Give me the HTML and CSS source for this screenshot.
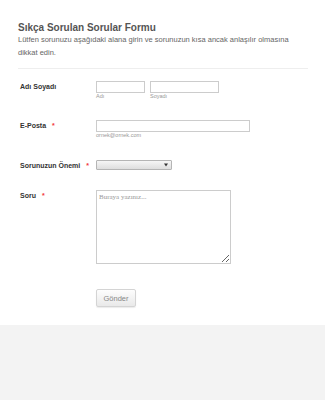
FILE: index.html
```html
<!DOCTYPE html>
<html>
  <head>
    <meta charset="UTF-8">
    <title>Sıkça Sorulan Sorular Formu</title>
    <link rel="stylesheet" href="styles.css">
  </head>
  <body>
    <form class="form-all">
      <div class="form-header">
        <h2>Sıkça Sorulan Sorular Formu</h2>
        <p>Lütfen sorunuzu aşağıdaki alana girin ve sorunuzun kısa ancak anlaşılır olmasına dikkat edin.</p>
      </div>
      <ul class="form-section">
        <li class="form-line">
          <label class="form-label">Adı Soyadı</label>
          <div class="form-input">
            <span class="sub first">
              <input type="text" class="text name-first">
              <label>Adı</label>
            </span>
            <span class="sub">
              <input type="text" class="text name-last">
              <label>Soyadı</label>
            </span>
          </div>
        </li>
        <li class="form-line">
          <label class="form-label">E-Posta<span class="required">*</span></label>
          <div class="form-input">
            <span class="sub">
              <input type="email" class="text email">
              <label>ornek@ornek.com</label>
            </span>
          </div>
        </li>
        <li class="form-line importance">
          <label class="form-label">Sorunuzun Önemi<span class="required">*</span></label>
          <div class="form-input">
            <select class="dropdown">
              <option></option>
              <option>Düşük</option>
              <option>Orta</option>
              <option>Yüksek</option>
            </select>
          </div>
        </li>
        <li class="form-line">
          <label class="form-label">Soru<span class="required">*</span></label>
          <div class="form-input">
            <textarea class="textarea" placeholder="Buraya yazınız..."></textarea>
          </div>
        </li>
        <li class="form-line buttons">
          <div class="form-input">
            <button type="submit" class="submit">Gönder</button>
          </div>
        </li>
      </ul>
    </form>
  </body>
</html>
```

FILE: styles.css
```css
body {
  margin: 0;
  background: #f3f3f3;
  font-family: "Liberation Sans", Arial, sans-serif;
  color: #555;
}

.form-all {
  background: #fff;
  padding: 23px 17px 18px 18px;
}

.form-header {
  border-bottom: 1px solid #eee;
  padding-bottom: 9px;
}
.form-header h2 {
  margin: 0;
  font-size: 10px;
  font-weight: bold;
  line-height: 10px;
  color: #555;
}
.form-header p {
  margin: 0;
  font-size: 7.5px;
  line-height: 13px;
  color: #666;
}

.form-section {
  list-style: none;
  margin: 0;
  padding: 0;
}
.form-line {
  display: flex;
  padding-top: 12px;
  padding-bottom: 7px;
}
.form-line.importance {
  padding-top: 13px;
  padding-bottom: 6px;
}
.form-label {
  width: 76px;
  padding-left: 2px;
  flex-shrink: 0;
  font-size: 7px;
  font-weight: bold;
  line-height: 12px;
  color: #333;
}
.required {
  color: #f23a3c;
  margin-left: 6px;
}
.form-input {
  display: flex;
  gap: 5px;
}
.buttons .form-input {
  margin-left: 78px;
}

.sub {
  display: flex;
  flex-direction: column;
}
.sub label {
  padding-bottom: 2px;
  font-size: 5.5px;
  line-height: 6px;
  color: #999;
}
.text {
  box-sizing: border-box;
  height: 12px;
  margin: 0;
  padding: 0 2px;
  border: 1px solid #ccc;
  font-size: 7px;
}
.name-first { width: 49px; }
.name-last { width: 69px; }
.email { width: 154px; }

.dropdown {
  -webkit-appearance: none;
  appearance: none;
  box-sizing: border-box;
  width: 76px;
  height: 10px;
  margin: 0;
  padding: 0;
  border: 1px solid #b5b5b5;
  border-radius: 1px;
  background: url("data:image/svg+xml;utf8,<svg xmlns='http://www.w3.org/2000/svg' width='4' height='4'><path d='M0 0.5h4L2 3.5z' fill='%23333'/></svg>") no-repeat right 3px center,
              linear-gradient(#f6f6f6, #dedede);
  font-size: 7px;
}

.textarea {
  box-sizing: border-box;
  width: 135px;
  height: 74px;
  margin: 0;
  padding: 2px;
  border: 1px solid #ccc;
  font-family: "Liberation Serif", serif;
  font-size: 7px;
  resize: both;
}
.textarea::placeholder {
  color: #999;
}

.buttons {
  padding-top: 18px;
  padding-bottom: 0;
}
.submit {
  width: 40px;
  height: 18px;
  margin: 0;
  padding: 0;
  border: 1px solid #d4d4d4;
  border-radius: 2px;
  background: linear-gradient(#fdfdfd, #e9e9e9);
  font-family: "Liberation Sans", Arial, sans-serif;
  font-size: 7.5px;
  color: #888;
  box-shadow: 0 1px 1px rgba(0, 0, 0, 0.08);
}
```
